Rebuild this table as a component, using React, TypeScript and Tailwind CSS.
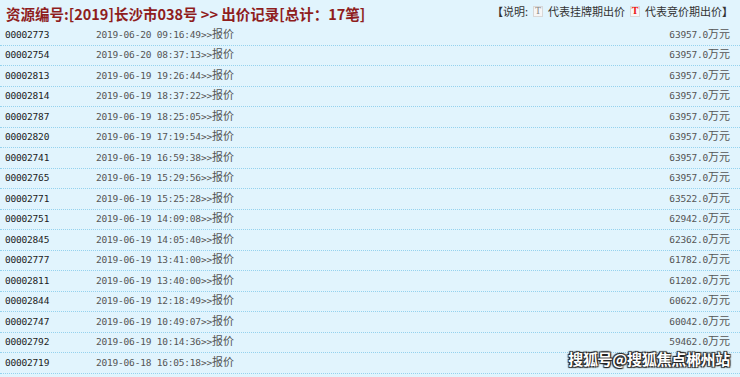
const bids = [
  { id: '00002773', time: '2019-06-20 09:16:49', price: '63957.0' },
  { id: '00002754', time: '2019-06-20 08:37:13', price: '63957.0' },
  { id: '00002813', time: '2019-06-19 19:26:44', price: '63957.0' },
  { id: '00002814', time: '2019-06-19 18:37:22', price: '63957.0' },
  { id: '00002787', time: '2019-06-19 18:25:05', price: '63957.0' },
  { id: '00002820', time: '2019-06-19 17:19:54', price: '63957.0' },
  { id: '00002741', time: '2019-06-19 16:59:38', price: '63957.0' },
  { id: '00002765', time: '2019-06-19 15:29:56', price: '63957.0' },
  { id: '00002771', time: '2019-06-19 15:25:28', price: '63522.0' },
  { id: '00002751', time: '2019-06-19 14:09:08', price: '62942.0' },
  { id: '00002845', time: '2019-06-19 14:05:40', price: '62362.0' },
  { id: '00002777', time: '2019-06-19 13:41:00', price: '61782.0' },
  { id: '00002811', time: '2019-06-19 13:40:00', price: '61202.0' },
  { id: '00002844', time: '2019-06-19 12:18:49', price: '60622.0' },
  { id: '00002747', time: '2019-06-19 10:49:07', price: '60042.0' },
  { id: '00002792', time: '2019-06-19 10:14:36', price: '59462.0' },
  // last amount is covered by the watermark in the screenshot
  { id: '00002719', time: '2019-06-18 16:05:18', price: '' },
];

const mono = "font-['DejaVu_Sans_Mono','Noto_Sans_CJK_SC',monospace]";

function TBadge({ red }: { red?: boolean }) {
  return (
    <span
      className={`inline-flex items-center justify-center w-[10px] h-[11px] mx-[5px] border border-[#d8d8d8] bg-[#f6f6f6] text-[10px] leading-none font-['Liberation_Serif',serif] ${
        red ? 'text-[#ee1111] font-bold' : 'text-[#888]'
      }`}
    >
      T
    </span>
  );
}

export default function App() {
  return (
    <div className="relative w-[740px] h-[377px] overflow-hidden bg-[#e1f4fd] font-['Noto_Sans_CJK_SC',sans-serif]">
      {/* header */}
      <div className="h-[25px] flex items-start justify-between pl-[6px] pr-[7px]">
        <div className="pt-[4px] text-[14.5px] leading-[20px] font-bold text-[#8f1d1d] whitespace-nowrap">
          资源编号:[2019]长沙市038号 &gt;&gt; 出价记录[总计：17笔]
        </div>
        <div className="pt-[3px] flex items-center text-[11px] leading-[16px] text-[#333] whitespace-nowrap">
          <span className="font-bold">【</span>说明:
          <TBadge />
          代表挂牌期出价
          <TBadge red />
          代表竞价期出价<span className="font-bold">】</span>
        </div>
      </div>

      {/* bid rows */}
      {bids.map((b) => (
        <div
          key={b.id}
          className={`h-[20.5px] flex items-center border-b border-dotted border-[#95d2ee] pl-[5px] pr-[10px] text-[9.5px] tracking-[-0.2px] ${mono}`}
        >
          <span className="w-[91px] text-[#1c1c1c]">{b.id}</span>
          <span className="flex-1 text-[#555]">
            {b.time}&gt;&gt;<span className="text-[11px] tracking-normal">报价</span>
          </span>
          {b.price && (
            <span className="text-[#555]">
              {b.price}
              <span className="text-[11px] tracking-normal">万元</span>
            </span>
          )}
        </div>
      ))}

      {/* watermark */}
      <div className="absolute right-[10px] top-[349px] text-[15px] leading-[20px] font-bold text-white tracking-[-0.3px] [text-shadow:1px_1px_1px_#222,-1px_-1px_1px_#222,1px_-1px_1px_#222,-1px_1px_1px_#222]">
        搜狐号@搜狐焦点郴州站
      </div>
    </div>
  );
}
